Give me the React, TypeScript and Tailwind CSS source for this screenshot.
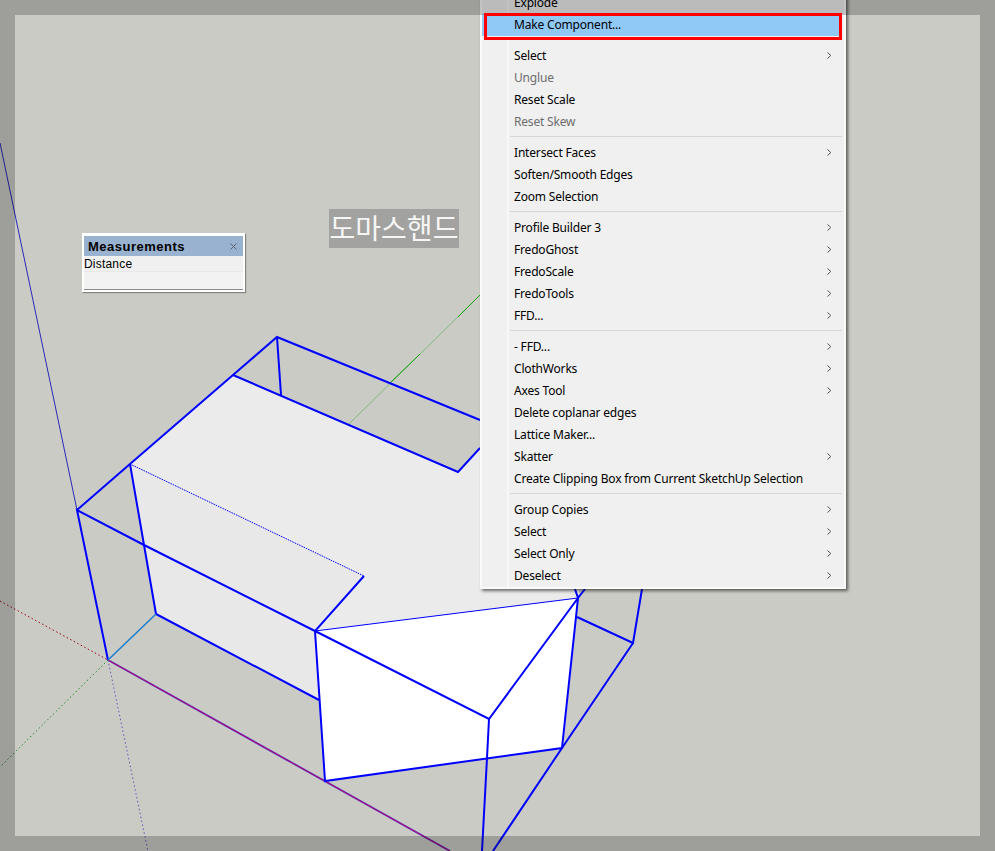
const menuFont = "font-['Noto_Sans','Noto_Sans_CJK_KR',sans-serif]";

type Row =
  | { sep: true }
  | { sep?: false; label: string; sub?: boolean; off?: boolean; active?: boolean };

const rows: Row[] = [
  { label: "Explode" },
  { label: "Make Component...", active: true },
  { sep: true },
  { label: "Select", sub: true },
  { label: "Unglue", off: true },
  { label: "Reset Scale" },
  { label: "Reset Skew", off: true },
  { sep: true },
  { label: "Intersect Faces", sub: true },
  { label: "Soften/Smooth Edges" },
  { label: "Zoom Selection" },
  { sep: true },
  { label: "Profile Builder 3", sub: true },
  { label: "FredoGhost", sub: true },
  { label: "FredoScale", sub: true },
  { label: "FredoTools", sub: true },
  { label: "FFD...", sub: true },
  { sep: true },
  { label: "- FFD...", sub: true },
  { label: "ClothWorks", sub: true },
  { label: "Axes Tool", sub: true },
  { label: "Delete coplanar edges" },
  { label: "Lattice Maker..." },
  { label: "Skatter", sub: true },
  { label: "Create Clipping Box from Current SketchUp Selection" },
  { sep: true },
  { label: "Group Copies", sub: true },
  { label: "Select", sub: true },
  { label: "Select Only", sub: true },
  { label: "Deselect", sub: true },
];

function Scene() {
  const blue = "#0000ff";
  return (
    <svg className="absolute inset-0" width={995} height={851} viewBox="0 0 995 851" fill="none">
      {/* faces */}
      <polygon points="233,375 458,472 480,448 600,448 578,598 315,631 364,576 130,464" fill="#ebebeb" />
      <polygon points="130,464 364,576 315,631 319,700 156,614" fill="#e8e8e8" />
      <polygon points="315,631 578,598 563,748 325,781" fill="#ffffff" />

      {/* axes */}
      <line x1="0" y1="143" x2="77" y2="510" stroke="#2828b8" strokeWidth="1" />
      <line x1="108" y1="660" x2="148" y2="851" stroke="#5a5ac0" strokeWidth="1" strokeDasharray="1.5 2.5" />
      <line x1="0" y1="601" x2="108" y2="660" stroke="#980c0c" strokeWidth="1" strokeDasharray="1.5 2.5" />
      <line x1="108" y1="660" x2="0" y2="767" stroke="#189018" strokeWidth="1" strokeDasharray="1.5 2.5" />
      <line x1="349" y1="424" x2="480" y2="295" stroke="#7fb87f" strokeWidth="1" />
      <line x1="458" y1="317" x2="480" y2="295" stroke="#08a808" strokeWidth="1" />
      <line x1="390" y1="383" x2="420" y2="354" stroke="#08a808" strokeWidth="1" />
      <line x1="108" y1="660" x2="450" y2="851" stroke="#5038e0" strokeWidth="1.9" />
      <line x1="108" y1="660" x2="450" y2="851" stroke="#c00048" strokeWidth="0.9" />

      {/* edges */}
      <g stroke={blue} strokeWidth="2">
        <polyline points="77,510 130,464 233,375 277,337 480,420" />
        <polyline points="233,375 458,472 480,448" />
        <line x1="277" y1="337" x2="281" y2="395" />
        <polyline points="108,660 77,510 144,545 315,631 489,719 578,598 562,748 325,781 315,631 364,576" />
        <polyline points="130,464 144,545 156,614 319,700" />
        <polyline points="489,719 487,758 482,851" />
        <polyline points="577,617 633,643 642,589" />
        <polyline points="633,643 562,748 493,851" />
        <polyline points="575,589 578,598 585,589" />
      </g>
      <line x1="108" y1="660" x2="156" y2="614" stroke="#1f7fd0" strokeWidth="1.6" />
      <line x1="130" y1="464" x2="364" y2="576" stroke={blue} strokeWidth="1" strokeDasharray="1.5 1" />
      <line x1="315" y1="631" x2="578" y2="598" stroke={blue} strokeWidth="1" />
    </svg>
  );
}

function Measurements() {
  return (
    <div className="absolute left-[82px] top-[233px] w-[163px] h-[59px] bg-white p-[2px] pt-[3px] shadow-[1px_1px_1px_rgba(0,0,0,0.35)] flex flex-col">
      <div className="h-[20px] bg-[#98b2cf] flex items-center justify-between pl-[4px] pr-[6px]">
        <span className="font-['Liberation_Sans',sans-serif] font-bold text-[13px] tracking-[0.5px] text-black leading-none">
          Measurements
        </span>
        <svg width="7" height="7" viewBox="0 0 7 7" stroke="#5c6670" strokeWidth="1">
          <path d="M0.5 0.5 L6.5 6.5 M6.5 0.5 L0.5 6.5" />
        </svg>
      </div>
      <div className="flex-1 bg-[#f0f0f0] flex flex-col">
        <div className="h-[15px] pt-[1px] text-[12px] leading-[15px] text-black font-['Liberation_Sans',sans-serif] tracking-[0.2px]">
          Distance
        </div>
        <div className="flex-1 border-t border-[#e8e8e8] border-b border-b-[#8a8a8a] bg-[#f2f2f2]" />
      </div>
    </div>
  );
}

function Menu() {
  return (
    <div
      className={`absolute left-[480px] top-[-10px] w-[366px] bg-[#f0f0f0] border-2 border-[#fafafa] shadow-[2px_2px_3px_rgba(0,0,0,0.55)] ${menuFont}`}
    >
      <div className="absolute left-[25px] top-0 bottom-0 w-[2px] bg-white/50" />
      {rows.map((row, i) =>
        row.sep ? (
          <div key={i} className="relative h-[9px] pt-[3px] pl-[28px] pr-[2px]">
            <div className="h-px w-full bg-[#d7d7d7]" />
          </div>
        ) : (
          <div
            key={i}
            className={`relative h-[22px] flex items-center justify-between pl-[32px] pr-[12px] text-[12px] tracking-[-0.18px] ${
              row.active ? "bg-[#90c8f6] mr-[3px]" : ""
            } ${row.off ? "text-[#6d6d6d]" : "text-black"}`}
          >
            <span>{row.label}</span>
            {row.sub && (
              <svg className="mb-[2px]" width="5" height="7" viewBox="0 0 5 7" fill="none" stroke="#555" strokeWidth="1">
                <path d="M0.5 0.5 L3.8 3.5 L0.5 6.5" />
              </svg>
            )}
          </div>
        )
      )}
    </div>
  );
}

export default function App() {
  return (
    <div className="relative w-[995px] h-[851px] overflow-hidden bg-[#cbcbc6]">
      <Scene />
      <Measurements />
      <div className="absolute left-[329px] top-[209px] w-[130px] h-[39px] pb-[4px] bg-[#a2a2a0] flex items-center justify-center text-[28px] leading-none text-[#f6f6f6] font-['Noto_Sans_CJK_KR',sans-serif]">
        도마스핸드
      </div>
      <Menu />
      <div className="absolute inset-0 border-[15px] border-black/[0.22] pointer-events-none" />
      <div className="absolute left-[484px] top-[13px] w-[358px] h-[27px] border-[3px] border-[#ff0000] pointer-events-none" />
    </div>
  );
}
